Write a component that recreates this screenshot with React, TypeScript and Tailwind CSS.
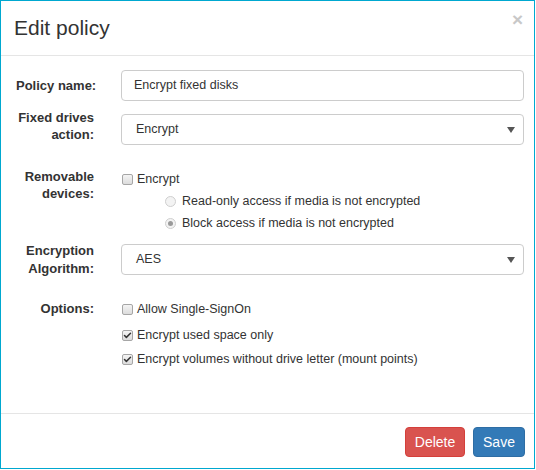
import { Check } from "lucide-react"

const font = { fontFamily: '"Liberation Sans", Arial, sans-serif' }

function Box({ checked }: { checked?: boolean }) {
  return (
    <span className="relative inline-flex h-[11px] w-[11px] shrink-0 items-center justify-center rounded-[2px] border border-[#a6a6a6] bg-gradient-to-b from-[#f4f4f4] to-[#dcdcdc]">
      {checked && (
        <Check size={9} strokeWidth={4} className="text-[#333]" />
      )}
    </span>
  )
}

function Radio({ checked }: { checked?: boolean }) {
  return (
    <span className="inline-flex h-[11px] w-[11px] shrink-0 items-center justify-center rounded-full border border-[#cfcfcf] bg-[#f3f3f3]">
      {checked && <span className="h-[5px] w-[5px] rounded-full bg-[#9a9a9a]" />}
    </span>
  )
}

function Select({ value }: { value: string }) {
  return (
    <div className="flex h-[31px] flex-1 items-center justify-between rounded-[4px] border border-[#ccc] pl-[14px] pr-[8px]">
      <span>{value}</span>
      <span className="h-0 w-0 border-x-[4px] border-t-[6px] border-x-transparent border-t-[#555]" />
    </div>
  )
}

export default function App() {
  return (
    <div
      style={font}
      className="flex h-[469px] w-[535px] flex-col border border-[#00a8d0] bg-white text-[12.5px] text-[#333]"
    >
      <header className="relative flex h-[55px] shrink-0 items-center border-b border-[#e5e5e5] px-[13px]">
        <h4 className="-mt-[2px] text-[21px] leading-none">Edit policy</h4>
        <span className="absolute right-[11px] top-[9px] text-[19px] font-bold leading-none text-[#c8c8c8]">
          ×
        </span>
      </header>

      <div className="flex flex-1 flex-col pl-[15px] pr-[10px] pt-[14px]">
        <div className="flex h-[31px] items-center">
          <label className="w-[78px] whitespace-nowrap text-right text-[13px] font-bold">Policy name:</label>
          <div className="ml-[27px] flex h-[31px] flex-1 items-center rounded-[4px] border border-[#ccc] px-[12px]">
            Encrypt fixed disks
          </div>
        </div>

        <div className="mt-[13px] flex h-[31px] items-center">
          <label className="-mt-[7px] w-[78px] whitespace-nowrap text-right text-[13px] font-bold leading-[17px]">
            Fixed drives
            <br />
            action:
          </label>
          <div className="ml-[27px] flex flex-1">
            <Select value="Encrypt" />
          </div>
        </div>

        <div className="mt-[23px] flex">
          <label className="w-[78px] whitespace-nowrap text-right text-[13px] font-bold leading-[17px]">
            Removable
            <br />
            devices:
          </label>
          <div className="ml-[28px] flex flex-col">
            <div className="flex h-[22px] items-center gap-[4px]">
              <Box />
              <span>Encrypt</span>
            </div>
            <div className="flex h-[22px] items-center gap-[6px] pl-[43px]">
              <Radio />
              <span>Read-only access if media is not encrypted</span>
            </div>
            <div className="flex h-[22px] items-center gap-[6px] pl-[43px]">
              <Radio checked />
              <span>Block access if media is not encrypted</span>
            </div>
          </div>
        </div>

        <div className="mt-[10px] flex h-[31px] items-center">
          <label className="w-[78px] whitespace-nowrap text-right text-[13px] font-bold leading-[18px]">
            Encryption
            <br />
            Algorithm:
          </label>
          <div className="ml-[27px] flex flex-1">
            <Select value="AES" />
          </div>
        </div>

        <div className="mt-[24px] flex">
          <label className="w-[78px] whitespace-nowrap text-right text-[13px] font-bold leading-[20px]">Options:</label>
          <div className="ml-[28px] flex flex-col">
            <div className="flex h-[20px] items-center gap-[4px]">
              <Box />
              <span>Allow Single-SignOn</span>
            </div>
            <div className="mt-[6px] flex h-[20px] items-center gap-[4px]">
              <Box checked />
              <span>Encrypt used space only</span>
            </div>
            <div className="mt-[4px] flex h-[20px] items-center gap-[4px]">
              <Box checked />
              <span>Encrypt volumes without drive letter (mount points)</span>
            </div>
          </div>
        </div>
      </div>

      <footer className="flex shrink-0 justify-end gap-[8px] border-t border-[#e5e5e5] pb-[11px] pr-[9px] pt-[13px]">
        <button className="h-[30px] w-[60px] rounded-[4px] border border-[#d43f3a] bg-[#d9534f] text-[14px] text-white">
          Delete
        </button>
        <button className="h-[30px] w-[52px] rounded-[4px] border border-[#2e6da4] bg-[#337ab7] text-[14px] text-white">
          Save
        </button>
      </footer>
    </div>
  )
}
